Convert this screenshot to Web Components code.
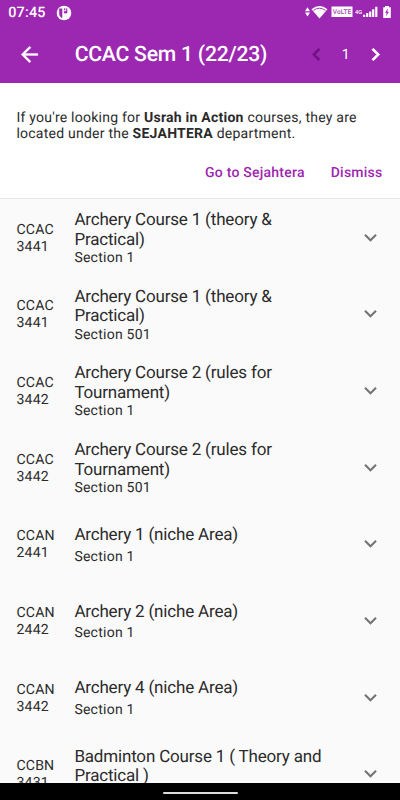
<!DOCTYPE html>
<html lang="en"><head><meta charset="utf-8"><title>CCAC Sem 1</title>
<style>html,body{margin:0;height:100%;overflow:hidden}body{font-family:Roboto,"Liberation Sans",sans-serif;color:#2b2b2b;text-rendering:geometricPrecision}</style></head>
<body><course-app></course-app>
<script>
const define=(name,html,init)=>customElements.define(name,class extends HTMLElement{
 connectedCallback(){ if(this.shadowRoot)return; const t=document.createElement('template');t.innerHTML=html;this.attachShadow({mode:'open'}).append(t.content.cloneNode(true));if(init)init(this,this.shadowRoot);}
});
define('status-bar',`<style>
:host{display:flex;height:25px;box-sizing:border-box;padding:0 9px 0 8.2px;align-items:center;color:#fff;font-size:14.4px;font-weight:500;letter-spacing:.2px}
.app{margin-left:10.2px}.right{margin-left:auto;margin-top:-1px}svg{display:block}
</style><span>07:45</span>
<svg class="app" width="16" height="16" viewBox="0 0 16 16"><circle cx="8" cy="8" r="7.3" fill="#fff"/><path d="M3.2 3.6h3.1v9.1H5.2Q3.2 11 3.2 9z" fill="#9c27b0"/><path d="M7.9 3.4h3.4v4.9H7.9z" fill="#9c27b0"/><path d="M8 5.7h1.7V3.4" stroke="#fff" stroke-width="1" fill="none"/></svg>
<svg class="right" width="87" height="16" viewBox="304 4 87 16">
<path d="M305 11.2 307.5 7.2 310 11.2zM305 12.5 307.5 16.4 310 12.5z" fill="#fff"/>
<path d="M311.5 9.3Q319.5 2.6 327.5 9.3L319.5 18.6z" fill="#fff"/><path d="M313.4 10.4Q319.5 6 325.6 10.4" fill="none" stroke="#9c27b0" stroke-width=".9"/>
<rect x="331.5" y="6.5" width="21" height="10.5" fill="#fff"/>
<text x="342" y="14.1" text-anchor="middle" font-size="6.6" font-weight="500" letter-spacing="0" fill="#a646b6">VoLTE</text>
<text x="355" y="14" font-size="5.7" font-weight="500" letter-spacing="0" fill="#fff">4G</text>
<path d="M363 14.7h2.2V17H363zM366.1 13h2.2v4h-2.2zM369.1 11.4h2.2V17h-2.2zM372.1 9.2h2.2V17h-2.2zM375.2 6.7h2.2V17h-2.2z" fill="#fff"/>
<path d="M383.2 7.2h1.8V6h4v1.2h1.8V18h-7.6z" fill="#fff"/><path d="M388 8.5l-3 4.2h1.7l-.7 3.5 3-4.5h-1.7z" fill="#9c27b0"/>
</svg>`);
define('app-bar',`<style>
:host{display:flex;height:58px;align-items:center;box-sizing:border-box;color:#fff;padding:0 12.5px 0 16.7px}
h1{font-size:21.2px;font-weight:500;letter-spacing:-.25px;margin:0 auto 0 33px;white-space:nowrap;line-height:24px;padding-top:2px}
.n{font-size:14.2px;width:33.4px;text-align:center;padding-top:2px}svg{display:block}
</style><svg width="25" height="25" viewBox="0 0 24 24" fill="#fff" stroke="#fff" stroke-width=".3"><path d="M20 11H7.83l5.59-5.59L12 4l-8 8 8 8 1.41-1.41L7.83 13H20z"/></svg>
<h1><slot></slot></h1>
<svg width="25" height="25" viewBox="0 0 24 24" fill="#6b1480" stroke="#6b1480" stroke-width=".5"><path d="M15.41 7.41 14 6l-6 6 6 6 1.41-1.41L10.83 12z"/></svg>
<span class="n">1</span>
<svg width="25" height="25" viewBox="0 0 24 24" fill="#fff" stroke="#fff" stroke-width=".7"><path d="M10 6 8.59 7.41 13.17 12l-4.58 4.59L10 18l6-6z"/></svg>`);
define('info-banner',`<style>
:host{display:flex;flex-direction:column;height:116px;box-sizing:border-box;background:#fff;border-bottom:1px solid #e6e6e6;padding:27px 17.5px 0 16.4px;font-size:14px;letter-spacing:.24px;line-height:16.7px}
p{margin:0;white-space:nowrap}b{font-weight:700}
.actions{display:flex;justify-content:flex-end;gap:26px;margin-top:22.5px;color:#9c27b0;font-weight:500}
</style><p>If you're looking for <b>Usrah in Action</b> courses, they are<br>located under the <b>SEJAHTERA</b> department.</p>
<div class="actions"><span>Go to Sejahtera</span><span>Dismiss</span></div>`);
define('course-row',`<style>
:host{display:grid;grid-template-columns:41.7px 1fr 25px;column-gap:16.3px;height:76.67px;box-sizing:border-box;padding:1px 16.9px 0 16.4px;align-items:center}
.code{font-size:14.1px;letter-spacing:.2px;line-height:17px;white-space:pre;padding-top:3px}
.title{font-size:17px;letter-spacing:-.18px;line-height:19.8px;white-space:pre}
.sec{font-size:14px;letter-spacing:.25px;line-height:17px;margin-top:-.5px}
.body{padding-top:3.4px}
:host([short]) .sec{margin-top:3px}:host([short]) .body{padding-top:3.8px}
svg{display:block}
</style><div class="code"></div><div class="body"><div class="title"></div><div class="sec"></div></div>
<svg width="25" height="25" viewBox="0 0 24 24" fill="#757575"><path d="M16.59 8.59 12 13.17 7.41 8.59 6 10l6 6 6-6z"/></svg>`,(h,r)=>{
for(const k of['code','title','sec'])r.querySelector('.'+k).textContent=h.dataset[k].replace('|','\n');});
define('nav-bar',`<style>:host{display:flex;height:17px;background:#000;align-items:center;justify-content:center}i{width:75px;height:1.5px;background:#ddd;margin-top:3px;border-radius:1px}</style><i></i>`);
const rows=[['CCAC|3441','Archery Course 1 (theory &|Practical)','Section 1'],['CCAC|3441','Archery Course 1 (theory &|Practical)','Section 501'],['CCAC|3442','Archery Course 2 (rules for|Tournament)','Section 1'],['CCAC|3442','Archery Course 2 (rules for|Tournament)','Section 501'],['CCAN|2441','Archery 1 (niche Area)','Section 1'],['CCAN|2442','Archery 2 (niche Area)','Section 1'],['CCAN|3442','Archery 4 (niche Area)','Section 1'],['CCBN|3431','Badminton Course 1 ( Theory and|Practical )','Section 1']];
define('course-app',`<style>:host{display:flex;flex-direction:column;height:800px;width:400px;overflow:hidden;background:#fafafa}
header{background:#9c27b0;height:82.5px;flex:none}main{flex:1;min-height:0;overflow:hidden}info-banner,nav-bar{flex:none}</style>
<header><status-bar></status-bar><app-bar>CCAC Sem 1 (22/23)</app-bar></header><info-banner></info-banner><main></main><nav-bar></nav-bar>`,(h,r)=>{
const m=r.querySelector('main');for(const [c,t,s] of rows){const e=document.createElement('course-row');Object.assign(e.dataset,{code:c,title:t,sec:s});if(!t.includes('|'))e.setAttribute('short','');m.append(e);}});
</script></body></html>
